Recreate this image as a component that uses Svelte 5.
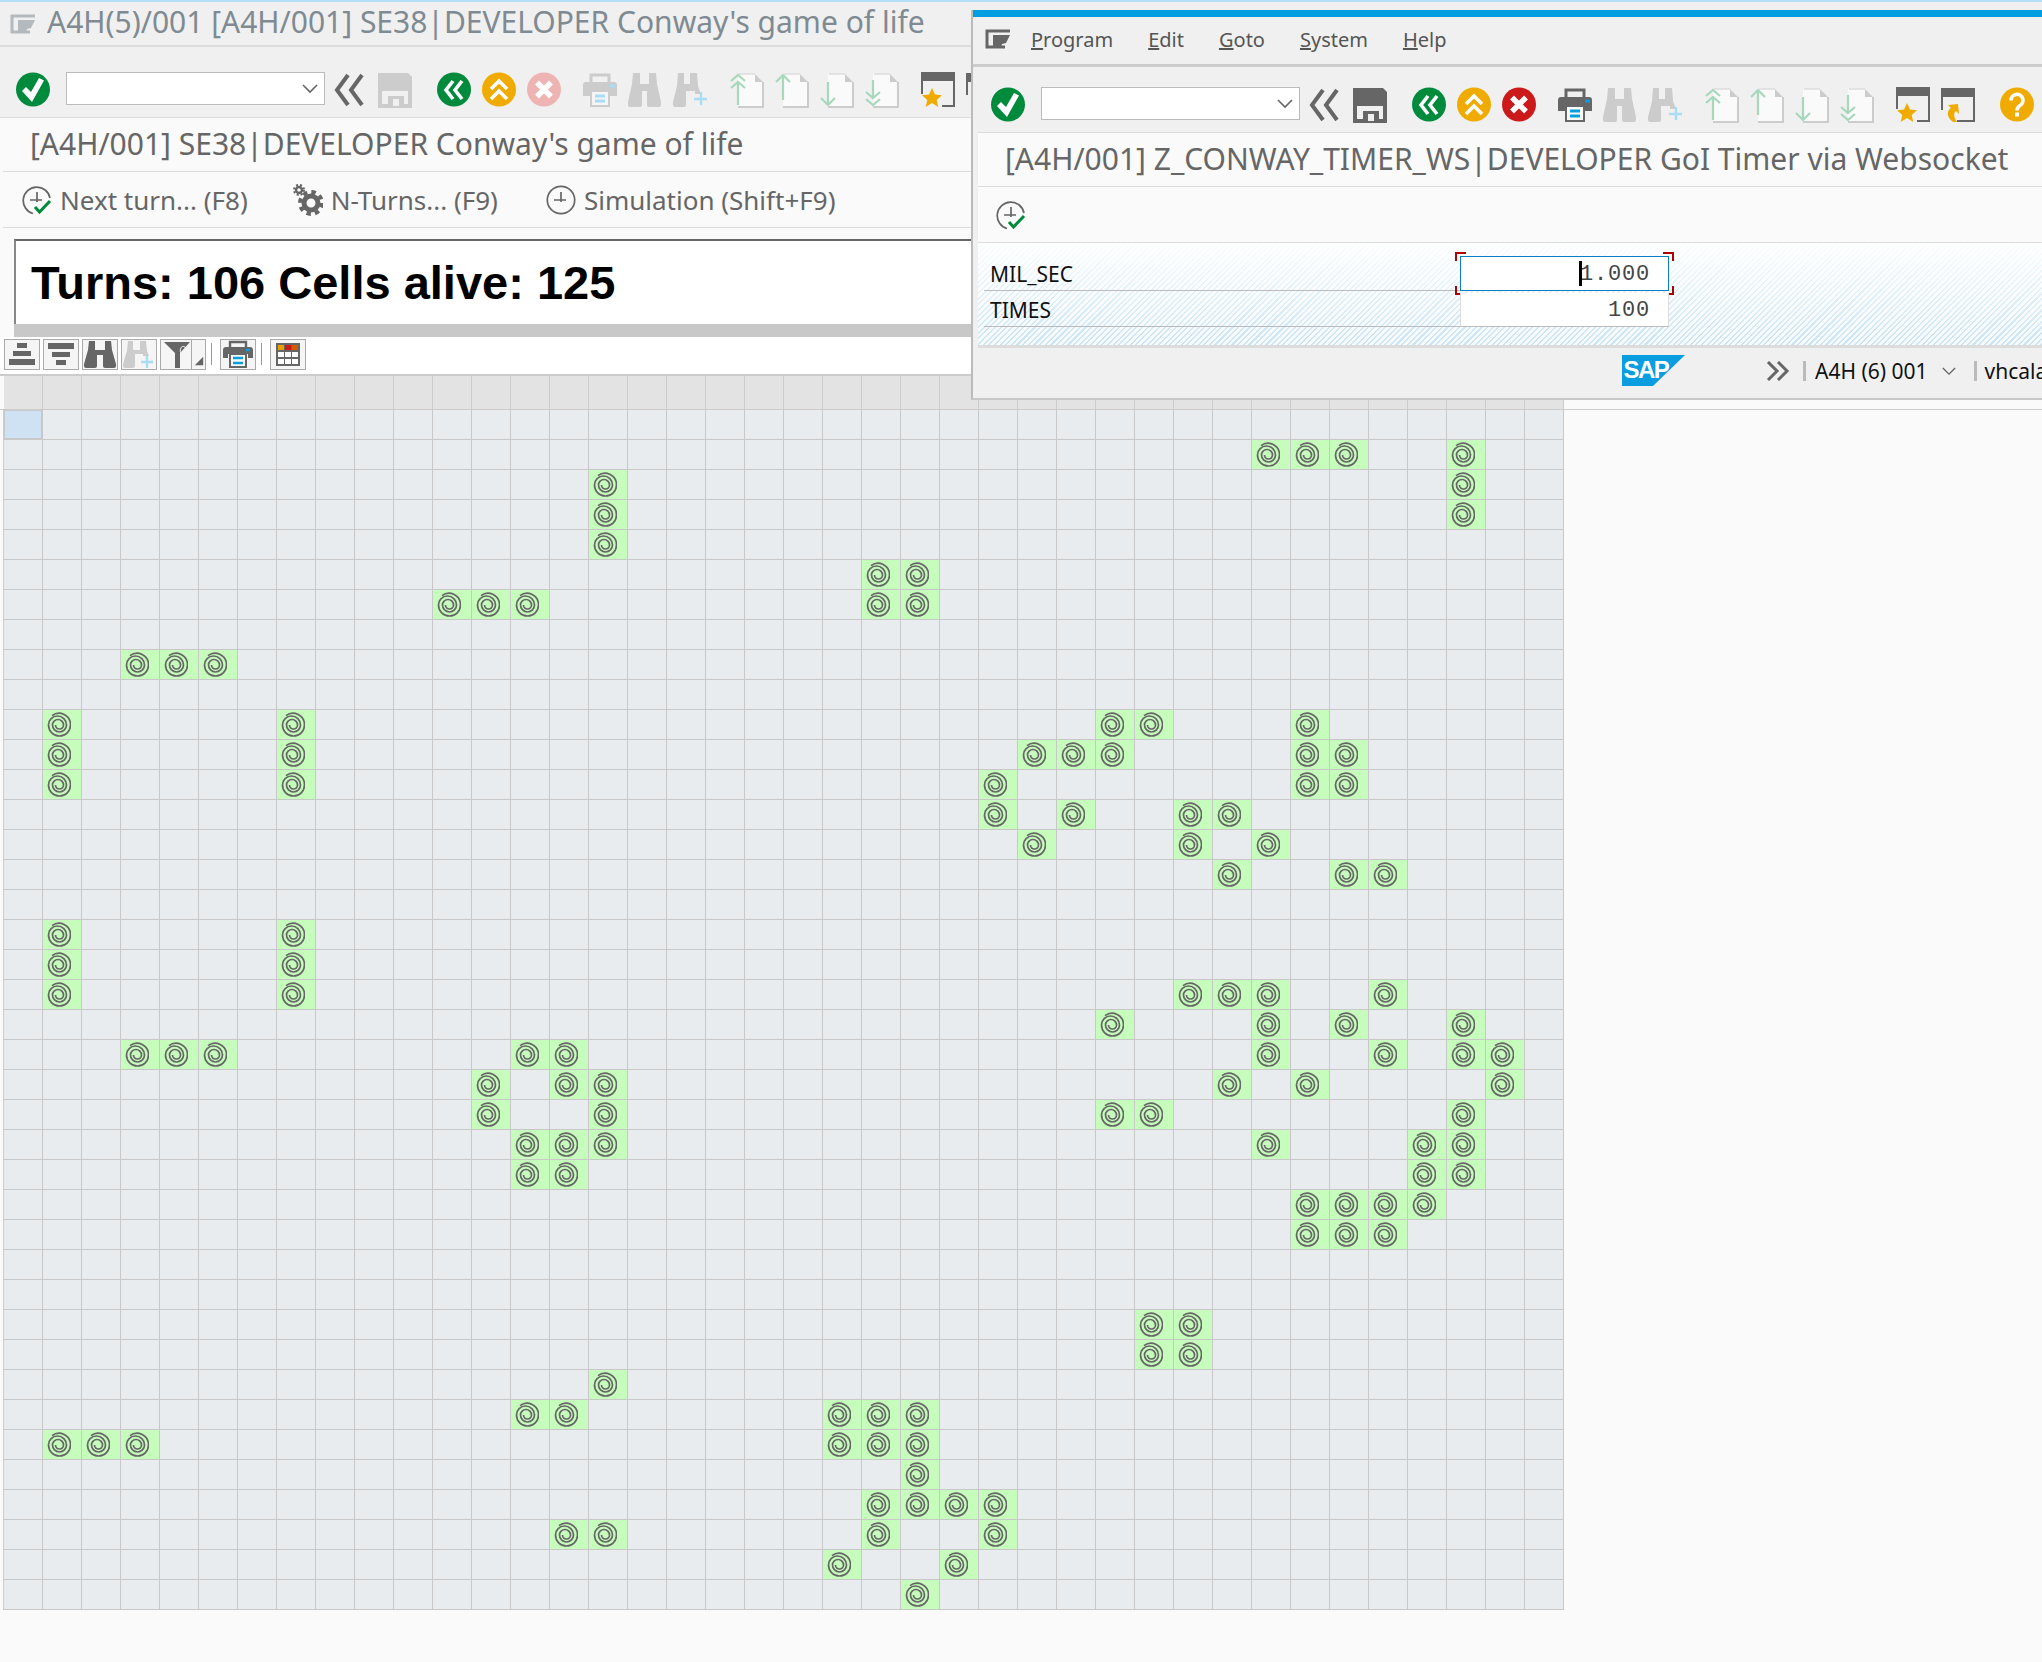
<script>
  const live = {
    1: [32, 33, 34, 37], 2: [15, 37], 3: [15, 37], 4: [15], 5: [22, 23], 6: [11, 12, 13, 22, 23],
    8: [3, 4, 5], 10: [1, 7, 28, 29, 33], 11: [1, 7, 26, 27, 28, 33, 34], 12: [1, 7, 25, 33, 34],
    13: [25, 27, 30, 31], 14: [26, 30, 32], 15: [31, 34, 35], 17: [1, 7], 18: [1, 7],
    19: [1, 7, 30, 31, 32, 35], 20: [28, 32, 34, 37], 21: [3, 4, 5, 13, 14, 32, 35, 37, 38],
    22: [12, 14, 15, 31, 33, 38], 23: [12, 15, 28, 29, 37], 24: [13, 14, 15, 32, 36, 37],
    25: [13, 14, 36, 37], 26: [33, 34, 35, 36], 27: [33, 34, 35], 30: [29, 30], 31: [29, 30],
    32: [15], 33: [13, 14, 21, 22, 23], 34: [1, 2, 3, 21, 22, 23], 35: [23], 36: [22, 23, 24, 25],
    37: [14, 15, 22, 25], 38: [21, 24], 39: [23]
  };
  const rows = Array.from({ length: 40 }, (_, r) => r);
  const cols = Array.from({ length: 40 }, (_, c) => c);
  const isLive = (r, c) => (live[r] || []).includes(c);
</script>

{#snippet glyph(kind, on)}
  <svg class="ico" viewBox="0 0 34 36" aria-hidden="true">
    {#if kind === 'check'}
      <circle cx="17" cy="17.5" r="17" fill="#008a3c" />
      <path d="M6 19l4-4 5 5L23 6l5 2.5L16 30z" fill="#fff" />
    {:else if kind === 'back'}
      <path d="M15 3L4 18l11 15M29 3L18 18l11 15" fill="none" stroke="#666" stroke-width="4" />
    {:else if kind === 'save'}
      <path fill={on ? '#666' : '#ccc'} fill-rule="evenodd" d="M0 1h30l4 4v31H0zM4 19v3h26v-3zM4 22v10h6V22zM26 22v10h4V22z" />
      <path fill="#f0f0f0" d="M10 22h16v2H10z" />
      <path fill="#f0f0f0" d="M15 27h6v7h-6z" />
    {:else if kind === 'green'}
      <circle cx="17" cy="17.5" r="17" fill="#008a3c" />
      <path d="M16 9l-7 9 7 9M25 9l-7 9 7 9" fill="none" stroke="#fff" stroke-width="3.6" />
    {:else if kind === 'up'}
      <circle cx="17" cy="17.5" r="17" fill="#f0ab00" />
      <path d="M9 17l8-8 8 8M9 27l8-8 8 8" fill="none" stroke="#fff" stroke-width="3.6" />
    {:else if kind === 'cancel'}
      <circle cx="17" cy="17.5" r="17" fill={on ? '#cc1919' : '#eeb4b4'} />
      <path d="M10 10.5l14 14M24 10.5l-14 14" fill="none" stroke="#fff" stroke-width="5.4" />
    {:else if kind === 'print'}
      {@const c = on ? '#666' : '#ccc'}
      <path d="M8 10V3h18v7" fill="none" stroke={c} stroke-width="3" />
      <path d="M3 10h28a3 3 0 0 1 3 3v11h-7v-6H7v6H0V13a3 3 0 0 1 3-3z" fill={c} />
      <path d="M8 19h18v15H8z" fill={on ? '#fafafa' : '#f5f5f5'} stroke={c} stroke-width="2" />
      <path d="M12 24h10M12 29h10M27 14h5" stroke={on ? '#0a9de0' : '#a9dcf5'} stroke-width="3" />
    {:else if kind === 'bino'}
      <path fill="#ccc" d="M5 1h7v11h9V1h7l1 11 4 18v3a2 2 0 0 1-2 2H21a2 2 0 0 1-2-2V19h-5v14a2 2 0 0 1-2 2H2a2 2 0 0 1-2-2v-3l4-18z" />
    {:else if kind === 'binop'}
      <path fill="#ccc" d="M5 1h6v11h6V1h7l1 13 3 8h-6v-3h-9v14a2 2 0 0 1-2 2H2a2 2 0 0 1-2-2v-3l4-16z" />
      <path d="M28 20v13M21 27h13" stroke="#a9dcf5" stroke-width="2.4" fill="none" />
    {:else if kind === 'dup' || kind === 'sup' || kind === 'sdn' || kind === 'ddn'}
      <path d="M8 2h17l8 8v25H8z" fill="#fafafa" />
      <path d="M25 2l8 8h-8z" fill="#ccc" />
      <path d="M33 10v25H8" fill="none" stroke="#ccc" stroke-width="2" />
      <path d="M9 2h16" stroke="#ddd" stroke-width="1.5" />
      {#if kind === 'dup'}
        <path d="M1 9l7-6 7 6M1 16l7-6 7 6M8 10v23" fill="none" stroke="#a8d8bc" stroke-width="2.2" />
      {:else if kind === 'sup'}
        <path d="M1 10l7-7 7 7M8 3v25" fill="none" stroke="#a8d8bc" stroke-width="2.2" />
      {:else if kind === 'sdn'}
        <path d="M1 26l7 7 7-7M8 33V10" fill="none" stroke="#a8d8bc" stroke-width="2.2" />
      {:else}
        <path d="M1 20l7 6 7-6M1 27l7 6 7-6M8 26V8" fill="none" stroke="#a8d8bc" stroke-width="2.2" />
      {/if}
    {:else if kind === 'star'}
      <path d="M0 0h34v9H0zM0 9h2v13H0zM32 9h2v26H21v-2h11z" fill="#666" />
      <path d="M11 16l3 6.6 7 .7-5.300 4.700 1.600 7L11 31l-6.300 3.900 1.600-7L1 23.300l7-.7z" fill="#f0ab00" />
    {:else if kind === 'jump'}
      <path d="M0 1h34v9H0zM0 10h2v13H0zM32 10h2v25H16v-2h16z" fill="#666" />
      <path d="M12 35C6 31 5 24 10 21l-3-3 10-1 1 10-3-3c-3 2-2 7 1 11z" fill="#f0ab00" />
    {:else if kind === 'help'}
      <circle cx="17" cy="17.5" r="17" fill="#f0ab00" />
      <path d="M11 13.500a6 6 0 1 1 9 5c-2.500 1.500-3 2.500-3 5" fill="none" stroke="#fff" stroke-width="3.600" />
      <rect x="15" y="25.500" width="4" height="4" fill="#fff" />
    {/if}
  </svg>
{/snippet}

{#snippet toolbar(on)}
  <div class="tb">
    {@render glyph('check', on)}
    <div class="combo">
      <svg class="chev" viewBox="0 0 16 10"><path d="M1 1l7 7 7-7" fill="none" stroke="#666" stroke-width="1.600" /></svg>
    </div>
    <span class="g-back">{@render glyph('back', on)}</span>
    {@render glyph('save', on)}
    <span class="g-nav">{@render glyph('green', on)}</span>
    {@render glyph('up', on)}
    {@render glyph('cancel', on)}
    <span class="g-print">{@render glyph('print', on)}</span>
    {@render glyph('bino', on)}
    {@render glyph('binop', on)}
    <span class="g-doc">{@render glyph('dup', on)}</span>
    {@render glyph('sup', on)}
    {@render glyph('sdn', on)}
    {@render glyph('ddn', on)}
    <span class="g-print">{@render glyph('star', on)}</span>
    {@render glyph('jump', on)}
    <span class="g-help">{@render glyph('help', on)}</span>
  </div>
{/snippet}

{#snippet menuIcon(color)}
  <svg class="menuicon" viewBox="0 0 26 20" aria-hidden="true">
    <path d="M25 2H2v16h18" fill="none" stroke={color} stroke-width="3" />
    <path d="M8 6h17l-4 8-4 1-1 3H8z" fill={color} />
  </svg>
{/snippet}

{#snippet clock(check)}
  <svg class="clock" viewBox="0 0 30 30" aria-hidden="true">
    {#if check}
      <path d="M11 28.500A13.500 13.500 0 1 1 28 13" fill="none" stroke="#666" stroke-width="1.700" />
    {:else}
      <circle cx="15" cy="15" r="13.700" fill="none" stroke="#666" stroke-width="1.700" />
    {/if}
    <path d="M15 7v10M8 15h12" fill="none" stroke="#666" stroke-width="1.700" />
    {#if check}
      <path d="M13 22l4.500 5L28 16" fill="none" stroke="#008a3c" stroke-width="3" />
    {/if}
  </svg>
{/snippet}

<div class="page">
  <div class="strip"></div>
  <div class="winbar">
    {@render menuIcon('#b4b9bd')}
    <span class="wintitle">A4H(5)/001 [A4H/001] SE38|DEVELOPER Conway's game of life</span>
  </div>
  {@render toolbar(false)}
  <div class="title">[A4H/001] SE38|DEVELOPER Conway's game of life</div>
  <div class="appbar">
    <span class="btn first">{@render clock(true)}<span>Next turn... (F8)</span></span>
    <span class="btn second">
      <svg class="gear" viewBox="0 0 30 32" aria-hidden="true">
        <circle cx="18" cy="19" r="7" fill="none" stroke="#666" stroke-width="5" />
        <circle cx="18" cy="19" r="11" fill="none" stroke="#666" stroke-width="4" stroke-dasharray="4.500 4.140" />
        <circle cx="6" cy="6" r="3" fill="none" stroke="#666" stroke-width="2.400" />
        <circle cx="6" cy="6" r="5" fill="none" stroke="#666" stroke-width="2" stroke-dasharray="2 2" />
      </svg>
      <span>N-Turns... (F9)</span>
    </span>
    <span class="btn third">{@render clock(false)}<span>Simulation (Shift+F9)</span></span>
  </div>

  <div class="info">
    <div class="infobox"><strong>Turns: 106 Cells alive: 125</strong></div>
    <div class="band"></div>
  </div>

  <div class="alvbar">
    <span class="ab">
      <svg viewBox="0 0 34 29"><path d="M12 3h10v5H12zM8 11h18v5H8zM4 19h26v6H4z" fill="#666" /></svg>
    </span>
    <span class="ab">
      <svg viewBox="0 0 34 29"><path d="M4 3h26v6H4zM8 12h18v5H8zM12 20h10v5H12z" fill="#666" /></svg>
    </span>
    <span class="ab">
      <svg viewBox="0 0 34 29"><path fill="#666" d="M6 1h6v9h10V1h6l1 9 4 14v2a2 2 0 0 1-2 2h-9a2 2 0 0 1-2-2V15h-6v11a2 2 0 0 1-2 2H3a2 2 0 0 1-2-2v-2l4-14z" /></svg>
    </span>
    <span class="ab">
      <svg viewBox="0 0 34 29"><path fill="#ccc" d="M6 1h5v9h7V1h6l1 10 2 5h-6v-2h-8v12a2 2 0 0 1-2 2H3a2 2 0 0 1-2-2v-2l4-13z" /><path d="M25 16v12M19 22h12" stroke="#a9dcf5" stroke-width="2.400" /></svg>
    </span>
    <span class="ab split">
      <svg class="funnel" viewBox="0 0 30 29"><path d="M3 2h26L19 13v15h-5V13z" fill="#666" /><path d="M20 13a3 4 0 1 1 1 1" fill="none" stroke="#f5f5f5" stroke-width="1" /></svg>
      <span class="drop"><svg viewBox="0 0 15 29"><path d="M12 17v9H3z" fill="#666" /></svg></span>
    </span>
    <i class="vsep"></i>
    <span class="ab">
      <svg viewBox="0 0 34 29"><path d="M9 7V2h16v5" fill="none" stroke="#666" stroke-width="2.400" /><path d="M5 7h24a3 3 0 0 1 3 3v8h-5v-4H7v4H2v-8a3 3 0 0 1 3-3z" fill="#666" /><path d="M9 14h16v13H9z" fill="#fafafa" stroke="#666" stroke-width="2" /><path d="M12 18h10M12 23h10M25 10h4" stroke="#0a9de0" stroke-width="2.400" /></svg>
    </span>
    <i class="vsep"></i>
    <span class="ab">
      <svg viewBox="0 0 34 29"><rect x="5" y="3" width="24" height="23" fill="#666" /><path d="M7 5h6v5H7z" fill="#e8a000" /><path d="M14 5h6v5h-6z" fill="#cc1919" /><path d="M21 5h6v5h-6z" fill="#d25a00" /><path d="M7 12h6v5H7zM14 12h6v5h-6zM21 12h6v5h-6zM7 19h6v5H7zM14 19h6v5h-6zM21 19h6v5h-6z" fill="#fff" /></svg>
    </span>
  </div>

  <div class="gridhead">
    {#each cols as c (c)}<span class="hc"></span>{/each}
  </div>
  <div class="grid">
    {#each rows as r (r)}
      {#each cols as c (c)}
        <span class="cell" class:on={isLive(r, c)} class:sel={r === 0 && c === 0}>
          {#if isLive(r, c)}
            <svg class="spiral" viewBox="0 0 24 26" aria-hidden="true">
              <path d="M5 3.700A11.500 11.500 0 0 1 23.500 13A11 11 0 0 1 1.500 13A9 9 0 0 1 19.500 13A7 7 0 0 1 5.500 13A5.500 5.500 0 0 1 16.500 13A4 4 0 0 1 8.500 13" fill="none" stroke="#666" stroke-width="1.700" />
            </svg>
          {/if}
        </span>
      {/each}
    {/each}
  </div>

  <section class="popup">
    <div class="blue"></div>
    <div class="menubar">
      {@render menuIcon('#666')}
      <nav class="menus">
        <span><u>P</u>rogram</span><span><u>E</u>dit</span><span><u>G</u>oto</span><span><u>S</u>ystem</span><span><u>H</u>elp</span>
      </nav>
    </div>
    {@render toolbar(true)}
    <div class="title ptitle">[A4H/001] Z_CONWAY_TIMER_WS|DEVELOPER GoI Timer via Websocket</div>
    <div class="appbar pbar">{@render clock(true)}</div>
    <div class="form">
      <div class="frow r1">
        <label for="ms">MIL_SEC</label>
        <div class="inputwrap">
          <input id="ms" class="focus" value="1.000" readonly />
          <i class="cursor"></i>
          <i class="mk tl"></i><i class="mk tr"></i><i class="mk bl"></i><i class="mk br"></i>
        </div>
      </div>
      <div class="frow r2">
        <label for="tm">TIMES</label>
        <div class="inputwrap"><input id="tm" value="100" readonly /></div>
      </div>
    </div>
    <div class="status">
      <svg class="sap" viewBox="0 0 63 31" aria-hidden="true">
        <path d="M0 0h63L31 31H0z" fill="#0a9de0" />
        <text x="1.500" y="23" class="saptext">SAP</text>
      </svg>
      <svg class="more" viewBox="0 0 24 20" aria-hidden="true"><path d="M2 1l9 9-9 9M12 1l9 9-9 9" fill="none" stroke="#666" stroke-width="3" /></svg>
      <i class="ssep"></i>
      <span class="sysname">A4H (6) 001</span>
      <svg class="schev" viewBox="0 0 16 10"><path d="M1 1l7 7 7-7" fill="none" stroke="#666" stroke-width="1.600" /></svg>
      <i class="ssep two"></i>
      <span class="host">vhcala</span>
    </div>
  </section>
</div>

<style>
  :global(body) { margin: 0; background: #fafafa; }
  .page {
    position: relative; width: 2042px; height: 1662px; overflow: hidden;
    background: #fafafa; font-family: "Noto Sans", "Open Sans", sans-serif; color: #666;
  }
  .strip { height: 2px; background: #b4def6; }
  .winbar {
    height: 45px; box-sizing: border-box; display: flex; align-items: center; padding-left: 10px; gap: 11px;
    background: #f0f0f0; border-bottom: 2px solid #dcdcdc;
  }
  .menuicon { width: 26px; height: 20px; flex: none; }
  .wintitle { font-size: 30px; color: #7f8a92; white-space: nowrap; line-height: 40px; margin-top: -4px; }

  .tb {
    height: 71px; box-sizing: border-box; padding: 25px 0 0 16px; display: flex; gap: 11px; align-items: flex-start;
    background: #f0f0f0; border-bottom: 1px solid #dcdcdc; white-space: nowrap;
  }
  .tb span { display: block; line-height: 0; flex: none; }
  .ico { width: 34px; height: 36px; flex: none; display: block; }
  .combo {
    width: 259px; height: 33px; box-sizing: border-box; margin-left: 5px; margin-right: -3px; flex: none; position: relative;
    background: #fff; border: 1px solid #bbb;
  }
  .chev { position: absolute; right: 6px; top: 11px; width: 16px; height: 10px; }
  .g-nav { margin-left: 14px; }
  .g-print { margin-left: 11px; }
  .g-doc { margin-left: 12px; }
  .g-help { margin-left: 14px; }

  .title {
    height: 54px; box-sizing: border-box; margin-left: 3px; padding-left: 27px; border-bottom: 1px solid #dcdcdc;
    background: #fafafa; font-size: 30px; line-height: 52px; white-space: nowrap; color: #666;
  }
  .appbar {
    height: 56px; box-sizing: border-box; margin-left: 3px; display: flex; align-items: center; border-bottom: 1px solid #dcdcdc;
    background: #fafafa; font-size: 26px; white-space: nowrap;
  }
  .btn { display: flex; align-items: center; gap: 8px; }
  .btn.first { margin-left: 19px; }
  .btn.second { margin-left: 45px; }
  .btn.third { margin-left: 48px; }
  .clock { width: 30px; height: 30px; flex: none; }
  .gear { width: 30px; height: 32px; flex: none; }

  .info { margin: 11px 0 0 14px; height: 98px; display: flex; flex-direction: column; background: #fff; }
  .infobox {
    flex: 1; box-sizing: border-box; border-top: 2px solid #666; border-left: 2px solid #888; padding-left: 15px;
    display: flex; align-items: center;
    font-family: "Liberation Sans", Arial, sans-serif; color: #000;
  }
  .infobox strong { font-size: 47px; line-height: 58px; margin-top: 1px; }
  .band { height: 13px; background: #c8c8c8; }

  .alvbar {
    height: 39px; box-sizing: border-box; padding: 2px 0 0 4px; margin-left: 0; display: flex; gap: 3px; align-items: flex-start;
    background: #fff; border-bottom: 2px solid #ccc;
  }
  .ab {
    width: 36px; height: 31px; box-sizing: border-box; border: 1px solid #aaa; background: #f5f5f5; display: flex; flex: none;
  }
  .ab svg { width: 34px; height: 29px; display: block; }
  .ab.split { width: 46px; }
  .ab .funnel { width: 30px; flex: none; }
  .drop { width: 14px; height: 29px; border-left: 1px solid #aaa; flex: none; }
  .drop svg { width: 14px; }
  .vsep { width: 1px; height: 22px; margin: 4px 5px 0 2px; background: #999; flex: none; }

  .gridhead {
    display: flex; height: 34px; box-sizing: border-box; padding-left: 4px; border-bottom: 1px solid #ccc;
  }
  .hc { width: 39px; box-sizing: border-box; flex: none; background: #e3e3e3; border-right: 1px solid #ccc; }
  .grid {
    display: grid; grid-template-columns: repeat(40, 39px); grid-auto-rows: 30px; width: 1560px; margin-left: 3px;
    border-left: 1px solid #ccc;
  }
  .cell {
    box-sizing: border-box; background: #e9ecef; border-right: 1px solid #c8c8c8; border-bottom: 1px solid #c8c8c8; display: flex;
  }
  .cell.on { background: #c6fcbc; }
  .cell.sel { background: #cfe2f3; box-shadow: inset 0 0 0 1px #c8c8c8; }
  .spiral { width: 24px; height: 26px; margin: 2px 0 0 4px; }

  .popup {
    position: absolute; left: 971px; top: 10px; width: 1071px; height: 390px; box-sizing: border-box;
    background: #f0f0f0; border-left: 2px solid #bbb; border-bottom: 2px solid #c8c8c8;
  }
  .blue { height: 7px; background: #009de0; }
  .menubar {
    height: 50px; box-sizing: border-box; display: flex; align-items: center; padding: 0 0 3px 12px; border-bottom: 3px solid #ccc;
  }
  .menus { display: flex; gap: 35px; margin-left: 20px; font-size: 20px; color: #555; }
  .popup .tb { height: 66px; padding: 20px 0 0 18px; border-bottom: 1px solid #dcdcdc; margin-left: 5px; padding-left: 13px; }
  .ptitle { margin-left: 5px; padding-left: 27px; height: 54px; }
  .pbar { margin-left: 5px; padding-left: 18px; height: 56px; }
  .form {
    margin-left: 5px; height: 102px; box-sizing: border-box; padding: 13px 0 0 6px;
    background:
      linear-gradient(to bottom, rgba(255, 255, 255, .95), rgba(255, 255, 255, .1) 95%),
      repeating-linear-gradient(-45deg, #c6e2f4 0 1.5px, #f6fafd 1.5px 4px);
  }
  .frow { display: flex; align-items: stretch; width: 685px; }
  .r1 { height: 35px; margin-bottom: 2px; }
  .r2 { height: 34px; }
  label {
    width: 476px; box-sizing: border-box; padding: 3px 0 0 6px; font-size: 21px; line-height: 30px; color: #111; border-bottom: 1px solid #bbb;
  }
  .r2 label { padding-top: 2px; }
  .inputwrap { position: relative; width: 209px; }
  input {
    width: 100%; height: 100%; box-sizing: border-box; margin: 0; padding: 2px 18px 0 0; border: 0; border-bottom: 1px solid #bbb; outline: 0;
    border-left: 1px solid #ddd; border-right: 1px solid #ddd;
    background: #fff; text-align: right; font-family: "Liberation Mono", monospace; font-size: 22px; letter-spacing: 0.8px; color: #444;
  }
  input.focus { border: 1px solid #0a7fc4; }
  .cursor { position: absolute; left: 119px; top: 5px; width: 3px; height: 25px; background: #000; }
  .mk { position: absolute; width: 9px; height: 7px; border: 0 solid #b00000; }
  .tl { left: -5px; top: -4px; border-width: 2px 0 0 2px; }
  .tr { right: -5px; top: -4px; border-width: 2px 2px 0 0; }
  .bl { left: -5px; bottom: -4px; border-width: 0 0 2px 2px; }
  .br { right: -5px; bottom: -4px; border-width: 0 2px 2px 0; }

  .status {
    height: 55px; box-sizing: border-box; border-top: 3px solid #dcdcdc; margin-left: 5px; position: relative;
    display: flex; align-items: center; font-size: 21px; color: #111; overflow: hidden; white-space: nowrap;
  }
  .sap { width: 63px; height: 31px; margin: -8px 0 0 644px; flex: none; }
  .saptext { font: bold 24px "Liberation Sans", Arial, sans-serif; fill: #fff; letter-spacing: -1.5px; }
  .more { width: 24px; height: 20px; margin: -6px 0 0 81px; flex: none; }
  .ssep { width: 3px; height: 20px; background: #bbb; margin: -6px 0 0 13px; flex: none; }
  .sysname { margin: -6px 0 0 9px; }
  .schev { width: 14px; height: 9px; margin: -6px 0 0 14px; flex: none; }
  .ssep.two { margin-left: 18px; }
  .host { margin: -6px 0 0 8px; }
</style>
